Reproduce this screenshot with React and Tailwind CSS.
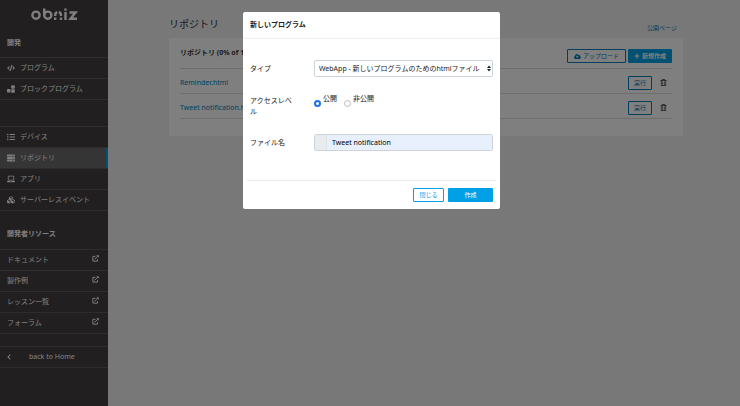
import { useState } from "react";
import {
  FaCode,
  FaListUl,
  FaServer,
  FaLaptop,
  FaCubes,
  FaChevronLeft,
  FaCloudUploadAlt,
  FaPlus,
  FaRegTrashAlt,
} from "react-icons/fa";

// Two blocks with a third one on top
function BlocksIcon({ className }) {
  return (
    <svg viewBox="0 0 16 16" fill="currentColor" className={className}>
      <rect x="0" y="8" width="7" height="7" rx="1.5" />
      <rect x="8.500" y="8.500" width="7" height="7" rx="1" />
      <rect x="8.500" y="0.500" width="7" height="7" rx="2" />
    </svg>
  );
}

function ExternalIcon({ className }) {
  return (
    <svg viewBox="0 0 16 16" fill="none" stroke="currentColor" strokeWidth="2.2" className={className}>
      <path d="M8 3H2V14H12.500V9.500" />
      <path d="M6 10L13 3" />
      <path d="M9.500 0.500H15.500V6.500Z" fill="currentColor" stroke="none" />
    </svg>
  );
}

function Logo() {
  return (
    <svg viewBox="0 0 47 12" role="img" aria-label="obniz" fill="none" stroke="currentColor" strokeWidth="2.4" className="h-3 w-[47px]">
      <circle cx="5" cy="7.200" r="3.600" />
      <path d="M13.200 0.500V7.200" />
      <circle cx="16.800" cy="7.200" r="3.600" />
      <path d="M24.200 12V9.500M24.200 8V7.200A3 3 0 0 1 26.200 4.200M27.800 4.200A3 3 0 0 1 30 7.200V8M30 9.500V12" />
      <path d="M34.500 4V12M34.500 0.500V2.700" />
      <path d="M38.500 4.500H44.500L39.500 10.700H46" />
    </svg>
  );
}

const devLinks = [
  { label: "プログラム", icon: FaCode },
  { label: "ブロックプログラム", icon: BlocksIcon },
];

const manageLinks = [
  { label: "デバイス", icon: FaListUl },
  { label: "リポジトリ", icon: FaServer, active: true },
  { label: "アプリ", icon: FaLaptop },
  { label: "サーバーレスイベント", icon: FaCubes },
];

const resources = ["ドキュメント", "製作例", "レッスン一覧", "フォーラム"];

const files = ["Reminder.html", "Tweet notification.html"];

function NavList({ items }) {
  return (
    <ul className="border-t border-[#5c595a]">
      {items.map(({ label, icon: Icon, active }) => (
        <li key={label} className="border-b border-[#5c595a]">
          <a
            href="#"
            className={`flex h-5 items-center gap-[5px] pl-[7px] ${active ? "border-r-2 border-[#00a0e6] bg-[#6b6b6b]" : ""}`}
          >
            <Icon className="size-2" />
            {label}
          </a>
        </li>
      ))}
    </ul>
  );
}

function Sidebar() {
  return (
    <nav className="w-[108px] shrink-0 bg-[#423e40] text-white">
      <a href="#" className="flex h-7 items-center justify-center">
        <Logo />
      </a>
      <h2 className="flex h-[29px] items-center pl-[7px] font-bold">開発</h2>
      <NavList items={devLinks} />
      <div className="h-[26px]" />
      <NavList items={manageLinks} />
      <h2 className="flex h-[38px] items-center pt-2 pl-[7px] font-bold">開発者リソース</h2>
      <ul className="border-t border-[#5c595a]">
        {resources.map((label) => (
          <li key={label} className="border-b border-[#5c595a]">
            <a href="#" className="flex h-5 items-center justify-between pr-[9px] pl-[7px]">
              {label}
              <ExternalIcon className="mb-[3px] size-[7px]" />
            </a>
          </li>
        ))}
      </ul>
      <a href="#" className="mt-3 flex h-[22px] items-center gap-[17px] border-y border-[#5c595a] pl-[6px]">
        <FaChevronLeft className="size-[6px]" />
        back to Home
      </a>
    </nav>
  );
}

function Repository() {
  return (
    <main className="flex-1 pt-4 pr-[57px] pl-[61px] text-[#333]">
      <div className="flex h-[22px] items-start justify-between pr-[6px]">
        <h1 className="text-[10px] leading-4">リポジトリ</h1>
        <a href="#" className="pt-2 text-[6px] leading-2 text-[#0080b8]">公開ページ</a>
      </div>
      <section className="bg-white px-[11px] pb-[17px]">
        <div className="flex h-[31px] items-center border-b border-[#ddd] pt-[6px]">
          <h2 className="mr-auto pb-[6px] font-bold">リポジトリ (0% of 1MB)</h2>
          <div className="flex gap-[2px] text-[6px]">
            <button className="flex h-[14px] items-center gap-[2px] rounded-[1px] border border-[#0080b8] px-[6px] text-[#0080b8]">
              <FaCloudUploadAlt className="size-[7px]" />
              アップロード
            </button>
            <button className="flex h-[14px] items-center gap-[2px] rounded-[1px] bg-[#00a0e6] px-[6px] font-bold text-white">
              <FaPlus className="size-[6px]" />
              新規作成
            </button>
          </div>
        </div>
        <ul>
          {files.map((name) => (
            <li key={name} className="flex h-[25px] items-center border-b border-[#ddd] pt-[3px]">
              <a href="#" className="mr-auto text-[#0080b8]">{name}</a>
              <button className="h-[14px] w-6 rounded-[1px] border border-[#0080b8] text-[6px] text-[#0080b8]">
                実行
              </button>
              <button aria-label="削除" className="mr-[5px] ml-2">
                <FaRegTrashAlt className="size-[7px]" />
              </button>
            </li>
          ))}
        </ul>
      </section>
    </main>
  );
}

function NewProgramDialog() {
  const [access, setAccess] = useState("public");
  const [fileName, setFileName] = useState("Tweet notification");

  const radioClass =
    "size-[7px] appearance-none rounded-full border border-[#bbb] bg-white checked:border-2 checked:border-[#1a73e8]";

  return (
    <div role="dialog" aria-labelledby="dialog-title" className="mx-auto w-[257px] rounded-[2px] bg-white text-[#222]">
      <h2 id="dialog-title" className="border-b border-[#eee] px-[7px] py-2 leading-[10px] font-bold">
        新しいプログラム
      </h2>
      <form className="px-[7px]">
        <div className="flex items-center pt-[21px]">
          <label htmlFor="type" className="w-16">タイプ</label>
          <div className="relative flex-1">
            <select
              id="type"
              className="block h-[17px] w-full appearance-none rounded-[2px] border border-[#ccd4da] bg-white pl-1"
            >
              <option>WebApp - 新しいプログラムのためのhtmlファイル</option>
            </select>
            <svg viewBox="0 0 4 6" fill="#222" className="pointer-events-none absolute top-[5px] right-[2px] h-[7px] w-1">
              <path d="M0 2.500L2 0L4 2.500ZM0 3.500L2 6L4 3.500Z" />
            </svg>
          </div>
        </div>
        <div role="radiogroup" aria-labelledby="access-label" className="flex pt-[18px]">
          <span id="access-label" className="w-12 leading-[11px]">アクセスレベル</span>
          <div className="ml-4 flex items-start gap-[7px] leading-2">
            <label className="flex items-end gap-[2px]">
              <input
                type="radio"
                name="access"
                className={radioClass}
                checked={access === "public"}
                onChange={() => setAccess("public")}
              />
              <span className="pb-1">公開</span>
            </label>
            <label className="flex items-end gap-[2px]">
              <input
                type="radio"
                name="access"
                className={radioClass}
                checked={access === "private"}
                onChange={() => setAccess("private")}
              />
              <span className="pb-1">非公開</span>
            </label>
          </div>
        </div>
        <div className="flex items-center pt-[17px] pb-[29px]">
          <label htmlFor="file-name" className="w-16">ファイル名</label>
          <div className="flex h-[17px] flex-1 overflow-hidden rounded-[2px] border border-[#ccd4da]">
            <span className="w-3 border-r border-[#dde2e8] bg-[#e9ecef]" />
            <input
              id="file-name"
              value={fileName}
              onChange={(e) => setFileName(e.target.value)}
              className="min-w-0 flex-1 bg-[#e8f0fe] pl-[5px] text-black"
            />
          </div>
        </div>
      </form>
      <div className="mx-1 flex justify-end gap-1 border-t border-[#e9e9e9] px-[3px] py-[7px] text-[6px]">
        <button className="h-[14px] w-[31px] rounded-[1px] border border-[#00a0e6] text-[#00a0e6]">閉じる</button>
        <button className="h-[14px] w-[45px] rounded-[1px] bg-[#00a0e6] text-white">作成</button>
      </div>
    </div>
  );
}

export default function App() {
  return (
    <div className="flex min-h-screen bg-[#f0f0f0] font-['Noto_Sans','Noto_Sans_CJK_JP',sans-serif] text-[7px] leading-[10px]">
      <Sidebar />
      <Repository />
      <div className="fixed inset-0 bg-black/50 pt-3 pl-[3px]">
        <NewProgramDialog />
      </div>
    </div>
  );
}
